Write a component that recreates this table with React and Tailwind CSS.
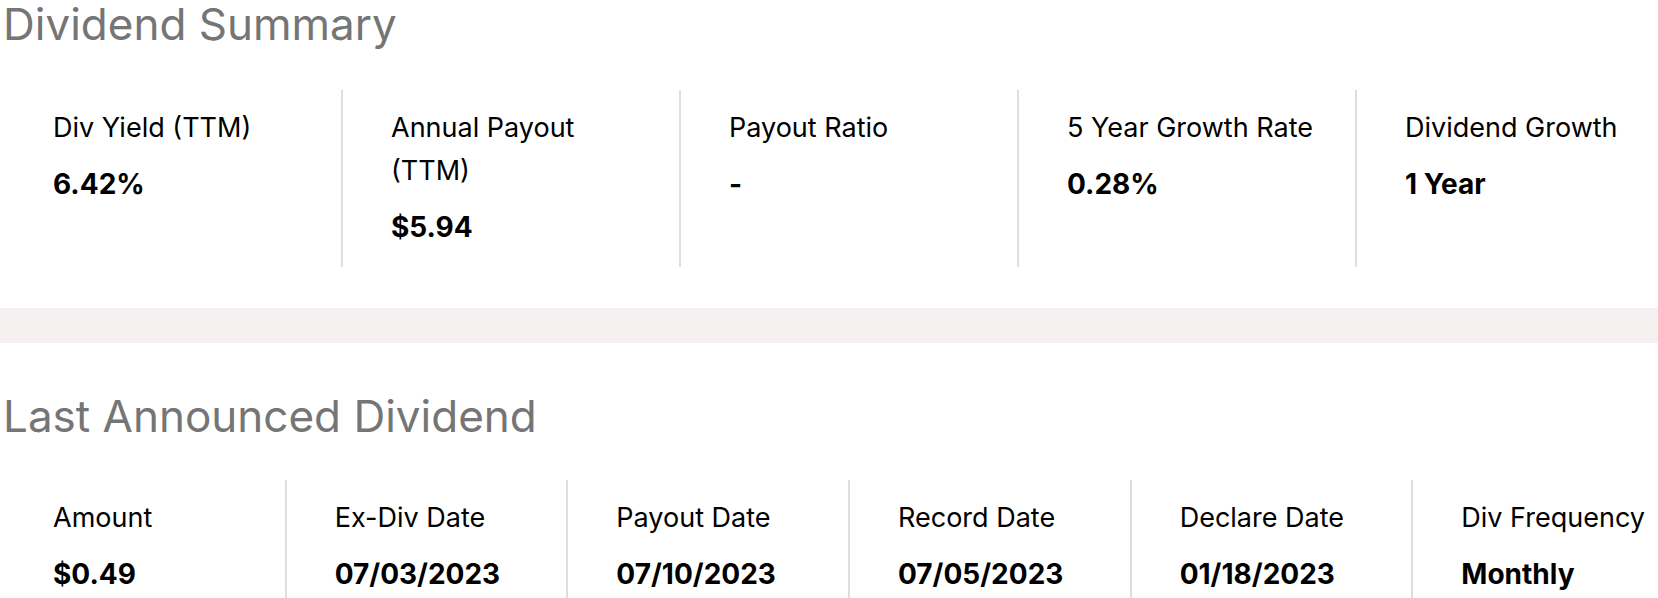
import React from "react";

const summary = [
    { label: "Div Yield (TTM)", value: "6.42%" },
    { label: "Annual Payout (TTM)", value: "$5.94" },
    { label: "Payout Ratio", value: "-" },
    { label: "5 Year Growth Rate", value: "0.28%" },
    { label: "Dividend Growth", value: "1 Year" },
];

const lastDividend = [
    { label: "Amount", value: "$0.49" },
    { label: "Ex-Div Date", value: "07/03/2023" },
    { label: "Payout Date", value: "07/10/2023" },
    { label: "Record Date", value: "07/05/2023" },
    { label: "Declare Date", value: "01/18/2023" },
    { label: "Div Frequency", value: "Monthly" },
];

const Stat = ({ label, value, first }) => (
    <div
        className={
            "pl-[48px] pr-[30px] pt-[16px] pb-[18px] border-l-2 " +
            (first ? "border-transparent" : "border-[#dedede]")
        }
    >
        <div className="text-[27px] leading-[43px] text-black">{label}</div>
        <div className="mt-[14px] text-[28px] leading-[43px] font-bold text-black">
            {value}
        </div>
    </div>
);

export default function App() {
    return (
        <div
            className="w-[1658px] h-[598px] overflow-hidden bg-white"
            style={{ fontFamily: "Inter, 'Noto Sans', sans-serif" }}
        >
            {/* Dividend Summary */}
            <section className="px-[3px]">
                <h2 className="text-[44px] leading-[48px] text-[#757575] font-normal">
                    Dividend Summary
                </h2>
                <div className="mt-[42px] grid grid-cols-5 w-[1690px]">
                    {summary.map((s, i) => (
                        <Stat key={s.label} {...s} first={i === 0} />
                    ))}
                </div>
            </section>

            <div className="mt-[41px] h-[35px] bg-[#f5f1f0]" />

            {/* Last Announced Dividend */}
            <section className="px-[3px]">
                <h2 className="mt-[49px] text-[44px] leading-[48px] text-[#757575] font-normal">
                    Last Announced Dividend
                </h2>
                <div className="mt-[40px] grid grid-cols-6 w-[1690px]">
                    {lastDividend.map((s, i) => (
                        <Stat key={s.label} {...s} first={i === 0} />
                    ))}
                </div>
            </section>
        </div>
    );
}
